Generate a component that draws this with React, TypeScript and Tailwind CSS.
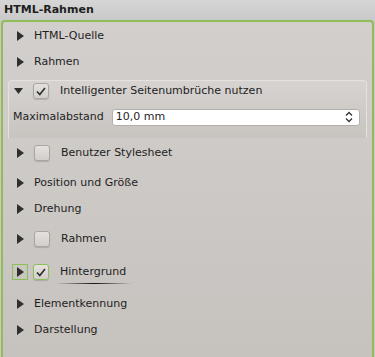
import React from "react";

function Arrow({ open = false }: { open?: boolean }) {
  if (open) {
    return (
      <svg width="9" height="6" viewBox="0 0 9 6" className="block">
        <path d="M0 0 L9 0 L4.5 6 Z" fill="#2f2f2f" />
      </svg>
    );
  }
  return (
    <svg width="7" height="10" viewBox="0 0 7 10" className="block">
      <path d="M0 0 L7 5 L0 10 Z" fill="#2f2f2f" />
    </svg>
  );
}

function Check({ checked = false, focus = false }: { checked?: boolean; focus?: boolean }) {
  return (
    <div
      className={
        "w-4 h-4 rounded-[3px] border flex items-center justify-center bg-gradient-to-b from-[#e4e1de] to-[#d2cfcb] shadow-[0_1px_1px_rgba(0,0,0,0.15)] " +
        (focus ? "border-[#8cbf55]" : "border-[#a9a5a1]")
      }
    >
      {checked && (
        <svg width="10" height="9" viewBox="0 0 10 9">
          <path d="M1 4.5 L3.8 7.5 L9 1" fill="none" stroke="#2c2c2c" strokeWidth="1.6" />
        </svg>
      )}
    </div>
  );
}

function Row({
  label,
  box,
  checked,
  h = "h-[26px]",
  cls = "",
}: {
  label: string;
  box?: boolean;
  checked?: boolean;
  h?: string;
  cls?: string;
}) {
  return (
    <div className={"flex items-center " + h + " " + cls}>
      <div className="w-[14px] ml-[14px] flex justify-start">
        <Arrow />
      </div>
      {box ? (
        <>
          <div className="ml-[3px]">
            <Check checked={checked} />
          </div>
          <span className="ml-[11px]">{label}</span>
        </>
      ) : (
        <span className="ml-[3px]">{label}</span>
      )}
    </div>
  );
}

export default function App() {
  return (
    <div
      className="w-[375px] h-[357px] overflow-hidden bg-[#cbc8c5] text-[11px] text-[#1e1e1e]"
      style={{ fontFamily: '"DejaVu Sans", sans-serif' }}
    >
      <div className="h-[20px] pl-[4px] flex items-center font-bold bg-gradient-to-b from-[#d6d6d6] to-[#c9c9c9]">
        HTML-Rahmen
      </div>
      <div className="mx-[1px] h-[340px] pt-[1px] border-2 border-b-0 border-[#8fbd58] rounded-t-[4px] bg-gradient-to-b from-[#d3cfcc] to-[#c6c2be]">
        <Row label="HTML-Quelle" />
        <Row label="Rahmen" />

        <div className="mt-[5px] mx-[5px] h-[58px] rounded-t-[4px] border border-b-0 border-[#e4e1de] bg-gradient-to-b from-[#d6d3d0] to-[#c8c4c0]">
          <div className="flex items-center h-[20px]">
            <div className="ml-[5px] w-[9px]">
              <Arrow open />
            </div>
            <div className="ml-[10px]">
              <Check checked />
            </div>
            <span className="ml-[11px]">Intelligenter Seitenumbrüche nutzen</span>
          </div>
          <div className="flex items-center h-[20px] mt-[6px]">
            <span className="ml-[4px]">Maximalabstand</span>
            <div className="ml-[8px] w-[248px] h-[17px] bg-white border border-[#b3afab] rounded-[3px] flex items-center justify-between pl-[3px] pr-[6px]">
              <span>10,0 mm</span>
              <svg width="8" height="12" viewBox="0 0 8 12">
                <path d="M1 4.5 L4 1.5 L7 4.5 M1 7.5 L4 10.5 L7 7.5" fill="none" stroke="#333" strokeWidth="1.3" />
              </svg>
            </div>
          </div>
        </div>

        <Row label="Benutzer Stylesheet" box h="h-[30px]" />
        <Row label="Position und Größe" cls="mt-[2px]" />
        <Row label="Drehung" />
        <Row label="Rahmen" box h="h-[30px]" cls="mt-[2px]" />

        <div className="flex items-center h-[30px] mt-[3px]">
          <div className="ml-[9px] w-4 h-4 border border-[#8cbf55] flex items-center justify-center">
            <Arrow />
          </div>
          <div className="ml-[5px]">
            <Check checked focus />
          </div>
          <div className="ml-[9px] relative">
            <span className="px-[2px]">Hintergrund</span>
            <div className="absolute -left-[2px] -right-[4px] -bottom-[4px] h-[1px] bg-gradient-to-r from-transparent via-[#151515] via-50% to-transparent" />
          </div>
        </div>

        <Row label="Elementkennung" cls="mt-[4px]" />
        <Row label="Darstellung" />
      </div>
    </div>
  );
}
